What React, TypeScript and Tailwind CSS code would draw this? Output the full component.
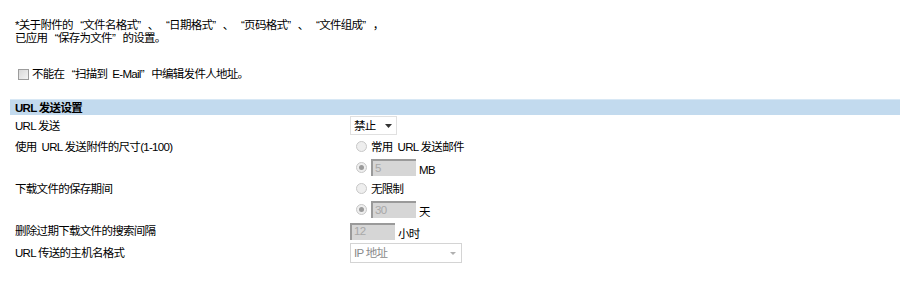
import React from 'react';

const font = { fontFamily: '"Liberation Sans", "Noto Sans CJK SC", sans-serif' };

// full-width style quotes like the original page renders them
const L = () => <span className="inline-block w-[10.5px] text-right">“</span>;
const R = () => <span className="inline-block w-[10.5px] text-left">”</span>;

// small radio circle, greyed out (disabled look)
function Radio({ checked }: { checked?: boolean }) {
    return (
        <span className="inline-flex items-center justify-center w-[11px] h-[11px] rounded-full border border-[#c8c8c8] bg-[#eeeeee] mr-[4px] shrink-0">
            {checked && <span className="w-[5px] h-[5px] rounded-full bg-[#9a9a9a]" />}
        </span>
    );
}

function GreyInput({ value }: { value: string }) {
    return (
        <span className="inline-flex items-center h-[17px] w-[45px] bg-[#d6d6d6] border-t-2 border-l-2 border-t-[#9a9a9a] border-l-[#9a9a9a] text-[#a8a8a8] pl-[2px] leading-none">
            {value}
        </span>
    );
}

function Row({ label, children, h = 'h-[21px]' }: { label?: string; children?: React.ReactNode; h?: string }) {
    return (
        <div className={`flex items-center ${h}`}>
            <div className="w-[340px] pl-[5px] shrink-0 whitespace-pre">{label}</div>
            <div className="flex items-center whitespace-pre">{children}</div>
        </div>
    );
}

export default function App() {
    return (
        <div className="w-[900px] h-[287px] bg-white text-[11.5px] tracking-[-0.7px] text-black leading-[12px]" style={font}>
            <div className="pl-[15px] pt-[19px] leading-[13px]">
                <p>*关于附件的<L />文件名格式<R />、<L />日期格式<R />、<L />页码格式<R />、<L />文件组成<R />，</p>
                <p>已应用<L />保存为文件<R />的设置。</p>
            </div>

            <div className="flex items-center pl-[18px] mt-[23px]">
                <span className="w-[11px] h-[11px] border border-[#9c9c9c] bg-gradient-to-br from-[#d8d8d8] to-[#f4f4f4] mr-[3px]" />
                <span className="whitespace-pre">不能在<L />扫描到  E-Mail<R />中编辑发件人地址。</span>
            </div>

            <div className="ml-[10px] mt-[19px]">
                <div className="h-[16px] bg-[#c2daee] border-t border-[#d8e8f5] flex items-center pl-[5px] font-bold">
                    URL 发送设置
                </div>

                <Row label="URL 发送">
                    <span className="inline-flex items-center h-[19px] w-[47px] border border-[#e0e0e0] bg-white pl-[3px]">
                        禁止
                        <svg className="ml-[9px]" width="7" height="4" viewBox="0 0 7 4"><path d="M0 0h7L3.5 4z" fill="#333" /></svg>
                    </span>
                </Row>
                <Row label="使用  URL 发送附件的尺寸(1-100)">
                    <span className="flex items-center ml-[6px]"><Radio />常用  URL 发送邮件</span>
                </Row>
                <Row>
                    <span className="flex items-center ml-[6px]"><Radio checked /><GreyInput value="5" /><span className="ml-[3px] mt-[5px]">MB</span></span>
                </Row>
                <Row label="下载文件的保存期间">
                    <span className="flex items-center ml-[6px]"><Radio />无限制</span>
                </Row>
                <Row>
                    <span className="flex items-center ml-[6px]"><Radio checked /><GreyInput value="30" /><span className="ml-[3px] mt-[5px]">天</span></span>
                </Row>
                <Row label="删除过期下载文件的搜索间隔" h="h-[22px]">
                    <span className="flex items-center"><GreyInput value="12" /><span className="ml-[3px] mt-[5px]">小时</span></span>
                </Row>
                <Row label="URL 传送的主机名格式" h="h-[22px]">
                    <span className="inline-flex items-center justify-between h-[20px] w-[112px] border border-[#d4d4d4] bg-white px-[3px] text-[#8a8a8a]">
                        IP 地址
                        <svg className="mr-[2px]" width="6" height="3" viewBox="0 0 6 3"><path d="M0 0h6L3 3z" fill="#b0b0b0" /></svg>
                    </span>
                </Row>
            </div>
        </div>
    );
}
